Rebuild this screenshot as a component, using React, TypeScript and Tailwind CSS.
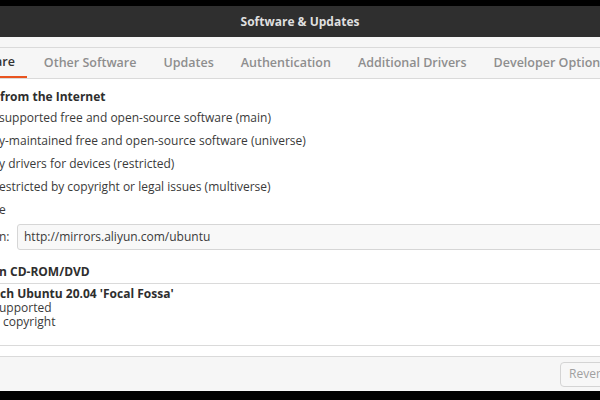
const tabs = [
  { label: "are", active: true },
  { label: "Other Software" },
  { label: "Updates" },
  { label: "Authentication" },
  { label: "Additional Drivers" },
  { label: "Developer Options" },
];

const sources = [
  "supported free and open-source software (main)",
  "y-maintained free and open-source software (universe)",
  "y drivers for devices (restricted)",
  "estricted by copyright or legal issues (multiverse)",
];

export default function App() {
  return (
    <div
      className="w-[600px] h-[400px] overflow-hidden bg-black flex flex-col text-[12px] text-[#3a3a3a]"
      style={{ fontFamily: "'Open Sans', 'Noto Sans', sans-serif" }}
    >
      <div className="h-[6px] shrink-0" />
      {/* header bar */}
      <div className="h-[31px] shrink-0 bg-[#2f2f2f] flex items-center justify-center">
        <span className="text-[12px] font-bold text-[#dfdfdf]">Software &amp; Updates</span>
      </div>

      <div className="flex flex-col bg-white">
        <div className="h-[10px] bg-[#f6f6f6]" />
        {/* tabs */}
        <div className="h-[32px] bg-[#f6f6f6] border-y border-[#dadada] flex items-stretch gap-[27px] text-[12.5px] font-semibold whitespace-nowrap">
          {tabs.map((t, i) => (
            <div
              key={i}
              className={
                t.active
                  ? "shrink-0 flex items-center -ml-[5px] pr-[12px] -mr-[10px] border-b-2 border-[#e95420] text-[#333]"
                  : "shrink-0 flex items-center text-[#8e8e8e]"
              }
            >
              {t.label}
            </div>
          ))}
        </div>

        {/* content */}
        <div className="flex flex-col whitespace-nowrap">
          <div className="h-[27px] pt-[9px] flex items-center font-bold text-[#2e2e2e]">from the Internet</div>
          {sources.map((s, i) => (
            <div key={i} className="h-[23px] flex items-center -ml-[1px]">
              {s}
            </div>
          ))}
          <div className="h-[23px] flex items-center -ml-[1px]">e</div>
          <div className="h-[29px] flex items-start gap-[6px] pt-[3px]">
            <span className="w-[12px] -ml-[1px] h-[26px] flex items-center">n:</span>
            <div className="flex-1 -mr-[20px] h-[26px] border border-[#d6d6d6] rounded-[3px] bg-[#f8f8f8] flex items-center pl-[6px]">
              http://mirrors.aliyun.com/ubuntu
            </div>
          </div>
          <div className="h-[33px] flex items-center pt-[11px] font-bold text-[#2e2e2e] -ml-[1px]">n CD-ROM/DVD</div>
          <div className="h-[63px] border-y border-[#dadada] flex flex-col pt-[3px] leading-[14px]">
            <div className="font-bold text-[#2e2e2e]">ch Ubuntu 20.04 'Focal Fossa'</div>
            <div className="-ml-[1px]">upported</div>
            <div className="pl-[3px]">copyright</div>
          </div>
          <div className="h-[11px] border-b border-[#dadada]" />
        </div>

        {/* bottom bar */}
        <div className="h-[34px] bg-[#f6f6f6] flex items-center justify-end">
          <div className="w-[60px] -mr-[20px] h-[25px] rounded-[4px] border border-[#d4d4d4] bg-[#f7f7f7] text-[#a0a0a0] flex items-center pl-[8px]">
            Revert
          </div>
        </div>
      </div>
      <div className="flex-1" />
    </div>
  );
}
